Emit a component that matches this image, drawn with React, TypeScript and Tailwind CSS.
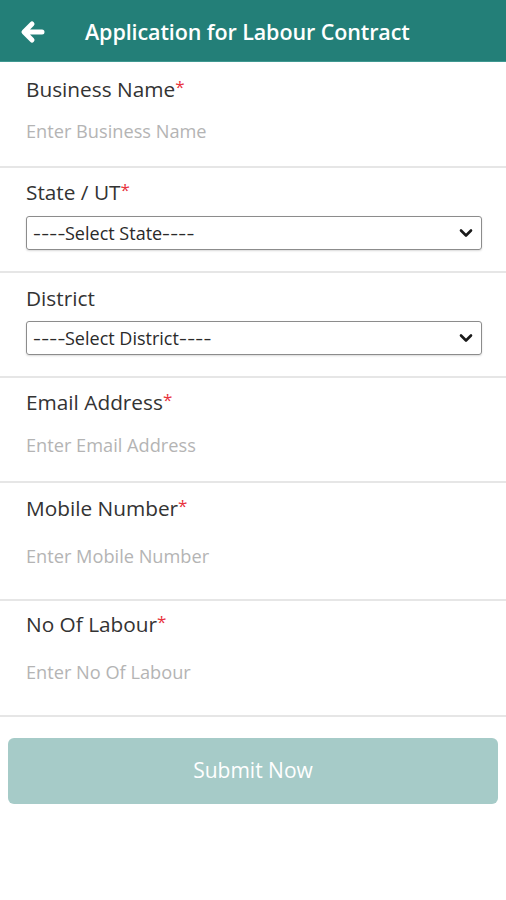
import React from "react";

const font = { fontFamily: '"Open Sans", "Noto Sans", sans-serif' };

function Label({ text, req = true }: { text: string; req?: boolean }) {
  return (
    <div className="text-[20.8px] leading-[28px] text-[#333333] pl-[26px]">
      {text}
      {req && <span className="text-[#e8323c] text-[17px] align-top relative top-[-2px]">*</span>}
    </div>
  );
}

function Placeholder({ text }: { text: string }) {
  return <div className="text-[18.2px] leading-[24px] text-[#b4b4b4] pl-[26px]">{text}</div>;
}

function Dashes() {
  return (
    <span className="inline-block w-[32px] overflow-visible">
      <span className="inline-block origin-left scale-x-[1.36] tracking-[0.2px]">----</span>
    </span>
  );
}

function SelectBox({ text }: { text: string }) {
  return (
    <div className="ml-[26px] mr-[24px] h-[34px] border-[1.5px] border-[#8c8c8c] rounded-[3px] shadow-[0_1px_2px_rgba(0,0,0,0.15)] flex items-center justify-between pl-[6px] pr-[8px]">
      <span className="text-[18px] text-[#2a2a2a] whitespace-nowrap">
        <Dashes />
        {text}
        <Dashes />
      </span>
      <svg width="14" height="10" viewBox="0 0 14 10">
        <path d="M2 2.5 L7 7.5 L12 2.5" fill="none" stroke="#1a1a1a" strokeWidth="2.6" strokeLinecap="round" strokeLinejoin="round" />
      </svg>
    </div>
  );
}

function Divider() {
  return <div className="h-[2px] bg-[#e6e6e6]" />;
}

export default function App() {
  return (
    <div className="w-[506px] h-[900px] bg-white" style={font}>
      <div className="h-[62px] bg-[#237f78] flex items-center pt-[3px] border-b border-[#3f9891]">
        <svg width="28" height="26" viewBox="0 0 28 26" className="ml-[19px]">
          <path d="M23 13 H6 M13 5 L5 13 L13 21" fill="none" stroke="white" strokeWidth="5" strokeLinecap="round" strokeLinejoin="round" />
        </svg>
        <div className="ml-[38px] text-white text-[21.5px] font-semibold tracking-[-0.1px]">Application for Labour Contract</div>
      </div>

      <div className="h-[104px] pt-[13px]">
        <Label text="Business Name" />
        <div className="mt-[16px]"><Placeholder text="Enter Business Name" /></div>
      </div>
      <Divider />

      <div className="h-[103px] pt-[10px]">
        <Label text="State / UT" />
        <div className="mt-[10px]"><SelectBox text="Select State" /></div>
      </div>
      <Divider />

      <div className="h-[103px] pt-[11px]">
        <Label text="District" req={false} />
        <div className="mt-[9px]"><SelectBox text="Select District" /></div>
      </div>
      <Divider />

      <div className="h-[103px] pt-[10px]">
        <Label text="Email Address" />
        <div className="mt-[17px]"><Placeholder text="Enter Email Address" /></div>
      </div>
      <Divider />

      <div className="h-[116px] pt-[11px]">
        <Label text="Mobile Number" />
        <div className="mt-[22px]"><Placeholder text="Enter Mobile Number" /></div>
      </div>
      <Divider />

      <div className="h-[114px] pt-[9px]">
        <Label text="No Of Labour" />
        <div className="mt-[22px]"><Placeholder text="Enter No Of Labour" /></div>
      </div>
      <Divider />

      <div className="px-[8px] pt-[21px]">
        <div className="h-[66px] rounded-[6px] bg-[#a6cbc8] flex items-center justify-center text-white text-[21px]">
          Submit Now
        </div>
      </div>
    </div>
  );
}
